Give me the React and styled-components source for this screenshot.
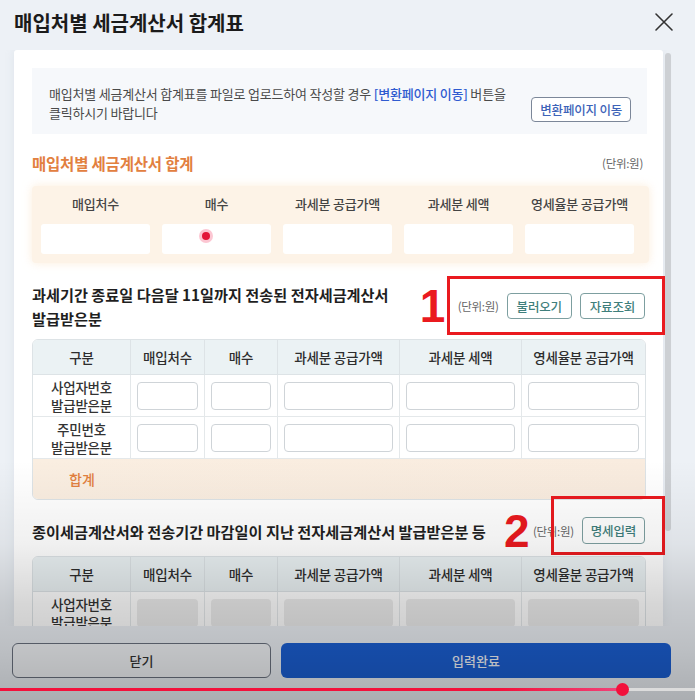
import React from "react";
import styled, { createGlobalStyle } from "styled-components";

const Global = createGlobalStyle`
  html, body { margin: 0; padding: 0; }
  body { font-family: "Noto Sans CJK KR", "Noto Sans", sans-serif; background: #edf1f6; }
  * { box-sizing: border-box; }
`;

const Page = styled.div`
  position: relative;
  width: 695px;
  height: 700px;
  overflow: hidden;
  background: #edf1f6;
  display: flex;
  flex-direction: column;
`;

const Header = styled.div`
  height: 50px;
  display: flex;
  align-items: center;
  justify-content: space-between;
  padding: 0 21px 6px 14px;
`;

const Title = styled.h1`
  margin: 0;
  font-size: 20px;
  font-weight: 700;
  color: #1b1b1b;
  letter-spacing: 0;
`;

const CloseBtn = styled.button`
  border: none;
  background: none;
  padding: 0;
  width: 20px;
  height: 20px;
  display: flex;
  cursor: pointer;
`;

const ScrollArea = styled.div`
  height: 576px;
  display: flex;
  gap: 2px;
  padding-left: 14px;
  padding-right: 24px;
  overflow: hidden;
`;

const Card = styled.div`
  flex: 1;
  background: #fff;
  border-radius: 3px 3px 0 0;
  padding: 18px 14px 0 18px;
  box-shadow: 0 0 8px rgba(180, 190, 205, 0.25);
`;

const ScrollThumb = styled.div`
  width: 6px;
  height: 478px;
  margin-top: 3px;
  background: #cdd0d4;
  border-radius: 3px;
`;

const InfoBox = styled.div`
  display: flex;
  align-items: flex-end;
  justify-content: space-between;
  background: #f6f8fb;
  padding: 14px 16px 12px 17px;
  margin-right: 2px;
  min-height: 66px;
`;

const InfoText = styled.p`
  margin: 0;
  width: 466px;
  font-size: 13px;
  line-height: 19px;
  color: #4a4a4a;
  letter-spacing: -0.2px;
`;

const LinkText = styled.span`
  color: #2f5bd0;
  font-weight: 500;
`;

const OutlineBtn = styled.button`
  font-family: inherit;
  height: ${(p) => p.$h || 26}px;
  padding: 0 ${(p) => p.$px || 8}px;
  font-size: 12.5px;
  letter-spacing: -0.2px;
  border-radius: 4px;
  background: #fff;
  border: 1.5px solid ${(p) => p.$border || "#7d9fa0"};
  color: ${(p) => p.$color || "#3f7f7c"};
  font-weight: 500;
  cursor: pointer;
  white-space: nowrap;
`;

const SummaryHead = styled.div`
  display: flex;
  justify-content: space-between;
  align-items: center;
  margin-top: 18px;
  padding-right: 6px;
`;

const OrangeTitle = styled.h2`
  margin: 0;
  font-size: 15.5px;
  font-weight: 700;
  color: #e2803f;
  letter-spacing: -0.2px;
`;

const Unit = styled.span`
  font-size: 11.5px;
  color: #666;
  letter-spacing: -0.3px;
  white-space: nowrap;
`;

const SummaryBox = styled.div`
  margin-top: 12px;
  background: #fdf3e7;
  border-radius: 4px;
  padding: 10px 15px 9px 9px;
  box-shadow: 0 0 10px rgba(250, 225, 195, 0.6);
  display: grid;
  grid-template-columns: repeat(5, 1fr);
  column-gap: 12px;
  row-gap: 12px;
`;

const SumLabel = styled.div`
  text-align: center;
  font-size: 13px;
  font-weight: 500;
  color: #444;
  line-height: 16px;
  letter-spacing: -0.2px;
`;

const SumInput = styled.div`
  position: relative;
  height: 30px;
  background: #fff;
  border-radius: 3px;
`;

const CursorDot = styled.span`
  position: absolute;
  left: 40px;
  top: 8px;
  width: 8px;
  height: 8px;
  border-radius: 50%;
  background: #e3163a;
  box-shadow: 0 0 0 3px rgba(250, 160, 180, 0.6);
`;

const Section = styled.div`
  margin-top: ${(p) => p.$mt}px;
`;

const SectionHead = styled.div`
  display: flex;
  align-items: center;
  justify-content: space-between;
  padding-right: 4px;
`;

const SectionTitle = styled.h3`
  margin: 0;
  width: ${(p) => p.$w || "auto"};
  font-size: 15.2px;
  line-height: 24px;
  font-weight: 700;
  color: #1f1f1f;
  letter-spacing: 0;
`;

const Controls = styled.div`
  position: relative;
  display: flex;
  align-items: center;
  gap: 8px;
`;

const RedFrame = styled.div`
  position: absolute;
  left: ${(p) => p.$l}px;
  right: -20px;
  top: ${(p) => p.$t}px;
  bottom: ${(p) => p.$b}px;
  border: 3px solid #ea1a1f;
  pointer-events: none;
`;

const BigNum = styled.span`
  position: absolute;
  left: ${(p) => p.$l}px;
  top: 50%;
  transform: translateY(-50%);
  font-family: "Liberation Sans", Arial, sans-serif;
  font-weight: 700;
  font-size: 46px;
  line-height: 1;
  color: #ea1a1f;
`;

const Table = styled.div`
  margin-top: ${(p) => p.$mt}px;
  margin-right: 3px;
  border: 1px solid #dde3e6;
  border-radius: 6px;
  overflow: hidden;
  display: grid;
  grid-template-columns: 98px 74px 73px 122px 122px 1fr;
`;

const Th = styled.div`
  height: 35px;
  display: flex;
  align-items: center;
  justify-content: center;
  background: #ebf2f4;
  font-size: 13.5px;
  font-weight: 500;
  color: #2d2d2d;
  letter-spacing: -0.2px;
  white-space: nowrap;
  border-right: ${(p) => (p.$last ? "none" : "1px solid #dde3e6")};
  border-bottom: 1px solid #dde3e6;
`;

const RowLabel = styled.div`
  height: 42px;
  display: flex;
  align-items: center;
  justify-content: center;
  text-align: center;
  font-size: 13.5px;
  font-weight: 500;
  line-height: 18px;
  color: #333;
  letter-spacing: -0.2px;
  border-right: 1px solid #e4e8ea;
  border-bottom: 1px solid #e4e8ea;
`;

const Td = styled.div`
  height: 42px;
  padding: 7px 6px;
  border-right: ${(p) => (p.$last ? "none" : "1px solid #e4e8ea")};
  border-bottom: 1px solid #e4e8ea;
`;

const CellInput = styled.div`
  height: 28px;
  border-radius: 4px;
  border: ${(p) => (p.$disabled ? "none" : "1px solid #cfd4d8")};
  background: ${(p) => (p.$disabled ? "#ececec" : "#fff")};
`;

const TotalRow = styled.div`
  grid-column: 1 / -1;
  height: 40px;
  display: grid;
  grid-template-columns: 98px 1fr;
  background: linear-gradient(90deg, #faeee1, #f9ecdf);
`;

const TotalLabel = styled.div`
  display: flex;
  align-items: center;
  justify-content: center;
  font-size: 14px;
  font-weight: 500;
  color: #e2803f;
`;

const Footer = styled.div`
  flex: 1;
  display: flex;
  gap: 10px;
  padding: 17px 24px 0 12px;
`;

const CloseFooterBtn = styled.button`
  font-family: inherit;
  width: 259px;
  height: 35px;
  border-radius: 6px;
  border: 1px solid #6b7280;
  background: #f3f5f8;
  color: #333;
  font-size: 13px;
  font-weight: 500;
`;

const SubmitBtn = styled.button`
  font-family: inherit;
  flex: 1;
  height: 35px;
  border-radius: 6px;
  border: none;
  background: #1b5fd3;
  color: #f4f6fb;
  font-size: 13px;
  font-weight: 500;
`;

const Shade = styled.div`
  position: absolute;
  left: 0;
  right: 0;
  bottom: 0;
  height: 240px;
  pointer-events: none;
  background: linear-gradient(
    to bottom,
    rgba(0, 0, 0, 0) 0%,
    rgba(0, 0, 0, 0.06) 35%,
    rgba(0, 0, 0, 0.16) 60%,
    rgba(0, 0, 0, 0.21) 80%,
    rgba(0, 0, 0, 0.28) 100%
  );
`;

const Progress = styled.div`
  position: absolute;
  left: 0;
  right: 0;
  bottom: 9px;
  height: 3px;
  background: #dcdcdc;
`;

const Played = styled.div`
  height: 100%;
  background: linear-gradient(90deg, #f2113b 0%, #f2113b 80%, #f0447a 100%);
  position: relative;
`;

const Knob = styled.span`
  position: absolute;
  right: -6px;
  top: -5px;
  width: 13px;
  height: 13px;
  border-radius: 50%;
  background: #f2113b;
`;

const cols = ["매입처수", "매수", "과세분 공급가액", "과세분 세액", "영세율분 공급가액"];

function DataTable({ mt, rows, disabled, total }) {
  return (
    <Table $mt={mt}>
      <Th>구분</Th>
      {cols.map((c, i) => (
        <Th key={c} $last={i === cols.length - 1}>{c}</Th>
      ))}
      {rows.map((r) => (
        <React.Fragment key={r[0]}>
          <RowLabel>
            {r[0]}
            <br />
            {r[1]}
          </RowLabel>
          {cols.map((c, i) => (
            <Td key={c} $last={i === cols.length - 1}>
              <CellInput $disabled={disabled} />
            </Td>
          ))}
        </React.Fragment>
      ))}
      {total && (
        <TotalRow>
          <TotalLabel>합계</TotalLabel>
          <div />
        </TotalRow>
      )}
    </Table>
  );
}

export default function App() {
  return (
    <Page>
      <Global />
      <Header>
        <Title>매입처별 세금계산서 합계표</Title>
        <CloseBtn aria-label="닫기">
          <svg width="20" height="20" viewBox="0 0 20 20" fill="none" stroke="#333" strokeWidth="1.6" strokeLinecap="round">
            <path d="M2 2 L18 18 M18 2 L2 18" />
          </svg>
        </CloseBtn>
      </Header>

      <ScrollArea>
        <Card>
          <InfoBox>
            <InfoText>
              매입처별 세금계산서 합계표를 파일로 업로드하여 작성할 경우 <LinkText>[변환페이지 이동]</LinkText> 버튼을
              클릭하시기 바랍니다
            </InfoText>
            <OutlineBtn $h={25} $border="#7c8799" $color="#3d63b8">변환페이지 이동</OutlineBtn>
          </InfoBox>

          <SummaryHead>
            <OrangeTitle>매입처별 세금계산서 합계</OrangeTitle>
            <Unit>(단위:원)</Unit>
          </SummaryHead>
          <SummaryBox>
            {cols.map((c) => (
              <SumLabel key={c}>{c}</SumLabel>
            ))}
            {cols.map((c, i) => (
              <SumInput key={c}>{i === 1 && <CursorDot />}</SumInput>
            ))}
          </SummaryBox>

          <Section $mt={19}>
            <SectionHead>
              <SectionTitle $w="372px">과세기간 종료일 다음달 11일까지 전송된 전자세금계산서 발급받은분</SectionTitle>
              <Controls>
                <Unit>(단위:원)</Unit>
                <OutlineBtn $px={9}>불러오기</OutlineBtn>
                <OutlineBtn $px={9}>자료조회</OutlineBtn>
                <RedFrame $l={-11} $t={-17} $b={-16} />
                <BigNum $l={-38}>1</BigNum>
              </Controls>
            </SectionHead>
            <DataTable
              mt={9}
              rows={[
                ["사업자번호", "발급받은분"],
                ["주민번호", "발급받은분"],
              ]}
              total
            />
          </Section>

          <Section $mt={17}>
            <SectionHead>
              <SectionTitle>종이세금계산서와 전송기간 마감일이 지난 전자세금계산서 발급받은분 등</SectionTitle>
              <Controls>
                <Unit>(단위:원)</Unit>
                <OutlineBtn $h={27} $px={8}>명세입력</OutlineBtn>
                <RedFrame $l={18} $t={-21} $b={-11} />
                <BigNum $l={-29}>2</BigNum>
              </Controls>
            </SectionHead>
            <DataTable mt={12} rows={[["사업자번호", "발급받은분"], ["주민번호", "발급받은분"]]} disabled />
          </Section>
        </Card>
        <ScrollThumb />
      </ScrollArea>

      <Footer>
        <CloseFooterBtn>닫기</CloseFooterBtn>
        <SubmitBtn>입력완료</SubmitBtn>
      </Footer>

      <Shade />
      <Progress>
        <Played style={{ width: "623px" }}>
          <Knob />
        </Played>
      </Progress>
    </Page>
  );
}
